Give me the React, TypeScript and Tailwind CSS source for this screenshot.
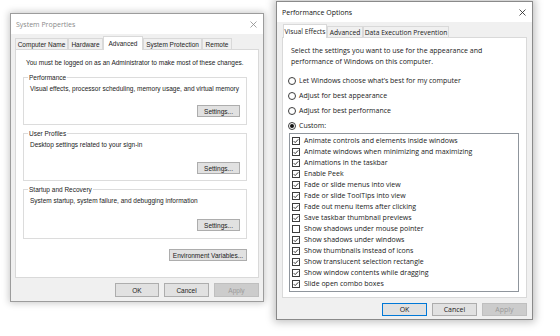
import React from "react";

const leftTabs: [string, string][] = [
  ["Computer Name", "w-[53px]"],
  ["Hardware", "w-[35px]"],
  ["Advanced", "w-[40px]"],
  ["System Protection", "w-[59px]"],
  ["Remote", "w-[30px]"],
];

const rightTabs: [string, string][] = [
  ["Visual Effects", "w-[44px]"],
  ["Advanced", "w-[36px]"],
  ["Data Execution Prevention", "w-[86px]"],
];

const effects: [string, boolean][] = [
  ["Animate controls and elements inside windows", true],
  ["Animate windows when minimizing and maximizing", true],
  ["Animations in the taskbar", true],
  ["Enable Peek", true],
  ["Fade or slide menus into view", true],
  ["Fade or slide ToolTips into view", true],
  ["Fade out menu items after clicking", true],
  ["Save taskbar thumbnail previews", true],
  ["Show shadows under mouse pointer", false],
  ["Show shadows under windows", true],
  ["Show thumbnails instead of icons", true],
  ["Show translucent selection rectangle", true],
  ["Show window contents while dragging", true],
  ["Slide open combo boxes", true],
];

const radios: [string, boolean][] = [
  ["Let Windows choose what\u2019s best for my computer", false],
  ["Adjust for best appearance", false],
  ["Adjust for best performance", false],
  ["Custom:", true],
];

function CloseX({ color }: { color: string }) {
  return (
    <svg width="7" height="7" viewBox="0 0 7 7">
      <path d="M0.5 0.5 L6.5 6.5 M6.5 0.5 L0.5 6.5" stroke={color} strokeWidth="0.8" />
    </svg>
  );
}

function CheckBox({ on }: { on: boolean }) {
  return (
    <svg width="8" height="8" viewBox="0 0 8 8" className="shrink-0">
      <rect x="0.5" y="0.5" width="7" height="7" fill="white" stroke="#3c3c3c" />
      {on && <path d="M1.7 4.1 L3.2 5.6 L6.3 2.3" fill="none" stroke="#222" strokeWidth="0.9" />}
    </svg>
  );
}

function Radio({ on }: { on: boolean }) {
  return (
    <svg width="8" height="8" viewBox="0 0 8 8" className="shrink-0">
      <circle cx="4" cy="4" r="3.5" fill="white" stroke="#3c3c3c" />
      {on && <circle cx="4" cy="4" r="2" fill="#111" />}
    </svg>
  );
}

function Group({ title, text, h, gap }: { title: string; text: string; h: string; gap: string }) {
  return (
    <fieldset className={`${h} border border-[#dcdcdc]`}>
      <legend className="ml-[4px] px-[1px] leading-[9px]">{title}</legend>
      <p className="mt-[2px] pl-[6px]">{text}</p>
      <div className={`${gap} pr-[6px] flex justify-end`}>
        <div className="w-[43px] h-[12px] flex items-center justify-center bg-[#e1e1e1] border border-[#adadad]">
          Settings...
        </div>
      </div>
    </fieldset>
  );
}

export default function App() {
  return (
    <div className="w-[560px] h-[336px] bg-white flex items-start overflow-hidden">
      {/* System Properties */}
      <div className="mt-[13px] ml-[10px] w-[254px] h-[289px] flex flex-col bg-[#f0f0f0] border border-[#9c9c9c] shadow-[0_0_7px_1px_rgba(0,0,0,0.22)] font-['Liberation_Sans',sans-serif] text-[6.5px] leading-[9px] text-[#222]">
        <div className="h-[20px] shrink-0 bg-white flex items-center justify-between pl-[5px] pr-[6px]">
          <span className="font-['Open_Sans',sans-serif] text-[7px] text-[#8a8a8a]">System Properties</span>
          <CloseX color="#8a8a8a" />
        </div>
        <div className="px-[4px] pt-[2px] flex flex-col">
          <div className="flex items-end h-[13px]">
            {leftTabs.map(([t, w]) =>
              t === "Advanced" ? (
                <div key={t} className={`${w} h-[14px] -mb-px relative z-10 bg-white border border-b-0 border-[#d9d9d9] flex items-center justify-center whitespace-nowrap`}>
                  {t}
                </div>
              ) : (
                <div key={t} className={`${w} h-[11px] bg-[#f0f0f0] border border-b-0 border-[#d9d9d9] flex items-center justify-center whitespace-nowrap`}>
                  {t}
                </div>
              )
            )}
          </div>
          <div className="h-[229px] bg-white border border-[#d9d9d9] pt-[8px] pl-[7px] pr-[11px] flex flex-col">
            <p className="pl-[3px]">You must be logged on as an Administrator to make most of these changes.</p>
            <div className="mt-[6px] flex flex-col gap-[4px]">
              <Group title="Performance" text="Visual effects, processor scheduling, memory usage, and virtual memory" h="h-[52px]" gap="mt-[12px]" />
              <Group title="User Profiles" text="Desktop settings related to your sign-in" h="h-[52px]" gap="mt-[13px]" />
              <Group title="Startup and Recovery" text="System startup, system failure, and debugging information" h="h-[54px]" gap="mt-[14px]" />
            </div>
            <div className="mt-[10px] flex justify-end">
              <div className="w-[78px] h-[12px] flex items-center justify-center bg-[#e1e1e1] border border-[#adadad]">
                Environment Variables...
              </div>
            </div>
          </div>
          <div className="mt-[5px] flex justify-end gap-[5px]">
            <div className="w-[44px] h-[14px] flex items-center justify-center bg-[#e1e1e1] border border-[#adadad]">OK</div>
            <div className="w-[45px] h-[14px] flex items-center justify-center bg-[#e1e1e1] border border-[#adadad]">Cancel</div>
            <div className="w-[45px] h-[14px] flex items-center justify-center bg-[#cccccc] border border-[#bfbfbf] text-[#9a9a9a]">Apply</div>
          </div>
        </div>
      </div>

      {/* Performance Options */}
      <div className="mt-[1px] ml-[12px] w-[257px] h-[319px] flex flex-col bg-[#f0f0f0] border border-[#8a8a8a] shadow-[0_0_8px_2px_rgba(0,0,0,0.25)] font-['Open_Sans',sans-serif] text-[7px] leading-[11px] text-[#1a1a1a]">
        <div className="h-[20px] shrink-0 bg-white flex items-center justify-between pl-[5px] pr-[6px]">
          <span className="text-[7px] text-[#111]">Performance Options</span>
          <CloseX color="#222" />
        </div>
        <div className="px-[5px] pt-[2px] flex flex-col">
          <div className="flex items-end h-[13px] pl-px text-[6.7px]">
            {rightTabs.map(([t, w]) =>
              t === "Visual Effects" ? (
                <div key={t} className={`${w} h-[14px] -mb-px relative z-10 bg-white border border-b-0 border-[#d9d9d9] flex items-center justify-center whitespace-nowrap`}>
                  {t}
                </div>
              ) : (
                <div key={t} className={`${w} h-[11px] bg-[#f0f0f0] border border-b-0 border-[#d9d9d9] flex items-center justify-center whitespace-nowrap`}>
                  {t}
                </div>
              )
            )}
          </div>
          <div className="h-[261px] bg-white border border-[#d9d9d9] pt-[7px] pl-[5px] pr-[7px] flex flex-col">
            <p className="pl-[3px]">
              Select the settings you want to use for the appearance and
              <br />
              performance of Windows on this computer.
            </p>
            <div className="mt-[6px] flex flex-col">
              {radios.map(([t, on]) => (
                <div key={t} className="h-[15px] flex items-center gap-[3px]">
                  <Radio on={on} />
                  <span>{t}</span>
                </div>
              ))}
            </div>
            <div className="ml-px h-[159px] border border-[#8f959c] bg-white pt-px pl-[2px] flex flex-col">
              {effects.map(([t, on]) => (
                <div key={t} className="h-[11px] flex items-center gap-[4px]">
                  <CheckBox on={on} />
                  <span>{t}</span>
                </div>
              ))}
            </div>
          </div>
          <div className="mt-[5px] flex justify-end gap-[5px]">
            <div className="w-[45px] h-[13px] flex items-center justify-center bg-[#e1e1e1] border border-[#0078d7]">OK</div>
            <div className="w-[45px] h-[13px] flex items-center justify-center bg-[#e1e1e1] border border-[#adadad]">Cancel</div>
            <div className="w-[45px] h-[13px] flex items-center justify-center bg-[#cccccc] border border-[#bfbfbf] text-[#9a9a9a]">Apply</div>
          </div>
        </div>
      </div>
    </div>
  );
}
